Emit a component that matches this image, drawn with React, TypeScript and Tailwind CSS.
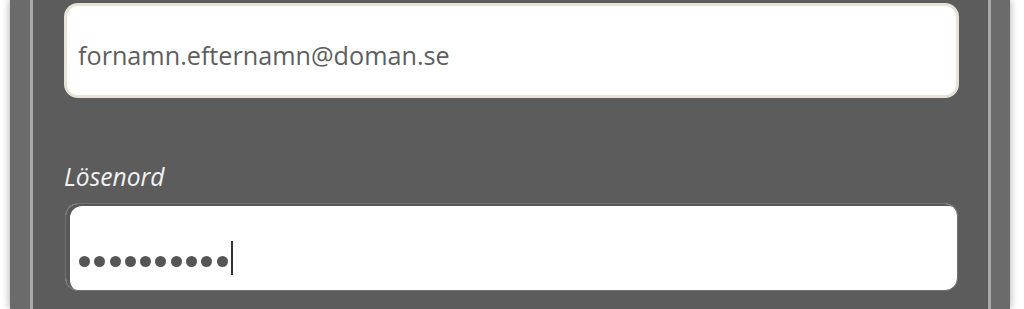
export default function App() {
  const dots = Array.from({ length: 10 }, (_, i) => i)

  return (
    <div className="h-[309px] overflow-hidden bg-white pl-[10px] pr-[14px] font-['Open_Sans',sans-serif]">
      <div className="h-full bg-[#6b6b6b] pl-[20px] pr-[19px] shadow-[0_0_8px_rgba(0,0,0,0.35)]">
        <div className="h-full border-l-[3px] border-r-[3px] border-[#a9a9a9] bg-[#5c5c5c] pl-[31px] pr-[29px] pt-[3px]">
          <div className="h-[95px] rounded-[14px] border-[3px] border-[#e8e2d7] bg-white px-[11px] pt-[32px]">
            <span className="text-[25.2px] leading-[34px] text-[#5e5e5e]">
              fornamn.efternamn@doman.se
            </span>
          </div>

          <label
            htmlFor="password"
            className="mt-[62px] block text-[24.6px] italic leading-[33px] text-[#f2f2f2]"
          >
            Lösenord
          </label>

          <div
            id="password"
            className="mt-[10px] ml-px mr-px flex h-[88px] items-center rounded-[13px] border border-[#727272] bg-white pl-[13px] pt-[22px] shadow-[inset_4px_2px_0_#585858]"
          >
            <div className="mt-[6px] flex h-[11px] gap-[4.3px]">
              {dots.map((dot) => (
                <span key={dot} className="h-[11px] w-[11px] rounded-full bg-[#555555]" />
              ))}
            </div>
            <span className="ml-[3px] h-[34px] w-[2px] bg-[#333333]" />
          </div>
        </div>
      </div>
    </div>
  )
}
